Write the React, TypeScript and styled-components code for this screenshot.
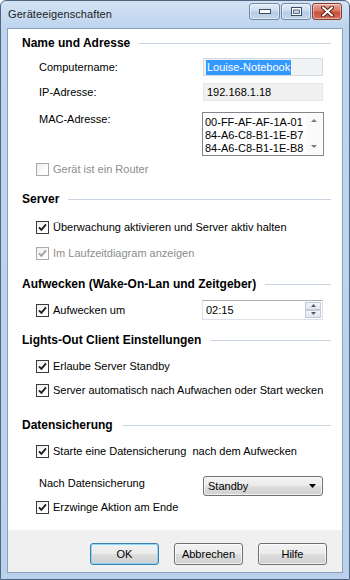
import React from 'react';
import styled, { createGlobalStyle } from 'styled-components';

const Global = createGlobalStyle`
  html, body { margin: 0; padding: 0; background: #fff; }
  body { width: 350px; height: 580px; overflow: hidden; font-family: "Liberation Sans", Arial, sans-serif; }
  #root { width: 350px; height: 580px; }
`;

const Window = styled.div`
  box-sizing: border-box;
  width: 350px;
  height: 580px;
  border: 1px solid #50657f;
  border-radius: 6px 6px 0 0;
  background: linear-gradient(to bottom, #d3e3f4 0px, #bed5ee 27px, #b9d1ea 100%);
  padding: 0 6px 6px 6px;
  display: flex;
  flex-direction: column;
`;

const TitleBar = styled.div`
  height: 27px;
  display: flex;
  align-items: flex-start;
  justify-content: space-between;
  flex: none;
`;

const Title = styled.div`
  padding: 7px 0 0 1px;
  font-size: 11px;
  color: #1b1b1b;
  letter-spacing: 0.1px;
`;

const Controls = styled.div`
  display: flex;
  gap: 1px;
  padding-top: 2px;
  margin-right: 1px;
`;

const CtrlButton = styled.div<{ $close?: boolean; $w: number }>`
  box-sizing: border-box;
  width: ${p => p.$w}px;
  height: 17px;
  border-radius: 3px;
  border: 1px solid ${p => (p.$close ? '#8a3b30' : '#7088a6')};
  background: ${p =>
    p.$close
      ? 'linear-gradient(to bottom, #e9a898 0%, #d87a66 45%, #c8523c 55%, #d0705a 100%)'
      : 'linear-gradient(to bottom, #e3ecf7 0%, #cddcee 45%, #b6cbe4 55%, #c4d6ec 100%)'};
  box-shadow: inset 0 0 0 1px rgba(255, 255, 255, 0.45);
  display: flex;
  align-items: center;
  justify-content: center;
`;

const ClientArea = styled.div`
  flex: 1;
  display: flex;
  flex-direction: column;
  border: 1px solid #8aa0bc;
  background: #fff;
`;

const Content = styled.div`
  flex: 1;
  display: flex;
  flex-direction: column;
  padding: 6px 11px 0 14px;
  font-size: 11px;
  color: #000;
`;

const SectionHeader = styled.div<{ $top: number }>`
  display: flex;
  align-items: center;
  gap: 9px;
  height: 16px;
  margin-top: ${p => p.$top}px;
  font-weight: bold;
  font-size: 12px;
  white-space: nowrap;
  &::after {
    content: '';
    flex: 1;
    height: 1px;
    background: #cad5e2;
  }
`;

const FieldRow = styled.div<{ $top: number; $h: number; $align?: 'center' | 'start' }>`
  display: grid;
  grid-template-columns: 181px 120px;
  align-items: ${p => p.$align ?? 'center'};
  height: ${p => p.$h}px;
  margin-top: ${p => p.$top}px;
`;

const Label = styled.div`
  padding-left: 17px;
  line-height: 14px;
`;

const CheckRow = styled.div<{ $top: number; $disabled?: boolean }>`
  display: flex;
  align-items: center;
  gap: 4px;
  height: 16px;
  margin-top: ${p => p.$top}px;
  padding-left: 14px;
  color: ${p => (p.$disabled ? '#8d8d8d' : '#000')};
  white-space: pre;
`;

const Box = styled.span<{ $disabled?: boolean }>`
  box-sizing: border-box;
  width: 13px;
  height: 13px;
  flex: none;
  border: 1px solid ${p => (p.$disabled ? '#a9a9a9' : '#3a3a3a')};
  background: linear-gradient(135deg, #ececec 0%, #ffffff 70%);
  display: flex;
  align-items: center;
  justify-content: center;
`;

const TextBox = styled.div<{ $bg: string; $border: string }>`
  box-sizing: border-box;
  height: 18px;
  background: ${p => p.$bg};
  border: 1px solid ${p => p.$border};
  display: flex;
  align-items: center;
  padding-left: 2px;
`;

const Selected = styled.span`
  background: #3399ff;
  color: #fff;
  padding: 1px 1px;
  line-height: 13px;
`;

const ListBox = styled.div`
  box-sizing: border-box;
  width: 122px;
  margin-left: -1px;
  height: 44px;
  border: 1px solid #82878f;
  background: #fff;
  display: flex;
`;

const ListItems = styled.div`
  flex: 1;
  padding: 3px 0 0 2px;
  line-height: 13px;
`;

const ScrollBar = styled.div`
  width: 16px;
  margin: 1px 1px 1px 0;
  background: #fafafa;
  display: flex;
  flex-direction: column;
  justify-content: space-between;
  align-items: center;
  padding: 5px 0;
`;

const TimeBox = styled.div`
  box-sizing: border-box;
  width: 121px;
  margin-left: -1px;
  height: 20px;
  border: 1px solid #dbe1e8;
  border-top-color: #abadb3;
  background: #fff;
  display: flex;
  align-items: center;
  padding-left: 3px;
  justify-content: space-between;
`;

const Spinner = styled.div`
  display: flex;
  flex-direction: column;
  gap: 0;
  margin-right: 1px;
`;

const SpinButton = styled.div`
  box-sizing: border-box;
  width: 16px;
  height: 8px;
  border: 1px solid #c3cbd5;
  background: linear-gradient(to bottom, #f3f6fa, #dfe6ef);
  display: flex;
  align-items: center;
  justify-content: center;
`;

const Combo = styled.div`
  box-sizing: border-box;
  height: 20px;
  border: 1px solid #707070;
  border-radius: 3px;
  background: linear-gradient(to bottom, #f3f3f3 0%, #ebebeb 48%, #dddddd 52%, #d1d1d1 100%);
  box-shadow: inset 0 0 0 1px rgba(255, 255, 255, 0.7);
  display: flex;
  align-items: center;
  justify-content: space-between;
  padding: 0 6px 0 4px;
`;

const ButtonBar = styled.div`
  height: 42px;
  flex: none;
  background: #f0f0f0;
  display: flex;
  justify-content: flex-end;
  align-items: flex-start;
  gap: 15px;
  padding: 13px 15px 0 0;
  box-sizing: border-box;
`;

const DialogButton = styled.div<{ $default?: boolean }>`
  box-sizing: border-box;
  width: 69px;
  height: 22px;
  border-radius: 3px;
  border: 1px solid ${p => (p.$default ? '#3c7fb1' : '#707070')};
  background: linear-gradient(to bottom, #f2f2f2 0%, #ebebeb 48%, #dddddd 52%, #cfcfcf 100%);
  box-shadow: inset 0 0 0 1px ${p => (p.$default ? 'rgba(120, 210, 250, 0.8)' : 'rgba(255, 255, 255, 0.75)')};
  font-size: 11px;
  color: #000;
  display: flex;
  align-items: center;
  justify-content: center;
`;

function Check({ checked, disabled, top, children }: { checked?: boolean; disabled?: boolean; top: number; children: React.ReactNode }) {
  return (
    <CheckRow $top={top} $disabled={disabled}>
      <Box $disabled={disabled}>
        {checked && (
          <svg width="9" height="9" viewBox="0 0 9 9">
            <path d="M1 4.3 L3.4 6.8 L8 1.4" fill="none" stroke={disabled ? '#a0a0a0' : '#1f1f1f'} strokeWidth="1.9" />
          </svg>
        )}
      </Box>
      <span>{children}</span>
    </CheckRow>
  );
}

const Tri = ({ up, color = '#606060', w = 7 }: { up?: boolean; color?: string; w?: number }) => (
  <svg width={w} height={Math.ceil(w / 2) + 1} viewBox={`0 0 ${w} ${Math.ceil(w / 2) + 1}`}>
    {up ? (
      <polygon points={`0,${Math.ceil(w / 2)} ${w},${Math.ceil(w / 2)} ${w / 2},0`} fill={color} />
    ) : (
      <polygon points={`0,0 ${w},0 ${w / 2},${Math.ceil(w / 2)}`} fill={color} />
    )}
  </svg>
);

export default function App() {
  return (
    <>
      <Global />
      <Window>
        <TitleBar>
          <Title>Geräteeigenschaften</Title>
          <Controls>
            <CtrlButton $w={31}>
              <svg width="12" height="5" viewBox="0 0 12 5">
                <rect x="0.5" y="0.5" width="11" height="4" fill="#fff" stroke="#3b4e66" />
              </svg>
            </CtrlButton>
            <CtrlButton $w={30}>
              <svg width="11" height="9" viewBox="0 0 11 9">
                <rect x="0.5" y="0.5" width="10" height="8" fill="#fff" stroke="#3b4e66" />
                <rect x="2.5" y="3" width="6" height="3.5" fill="#c6d6ea" stroke="#3b4e66" strokeWidth="0.8" />
              </svg>
            </CtrlButton>
            <CtrlButton $close $w={30}>
              <svg width="13" height="11" viewBox="0 0 13 11">
                <path d="M2 1.5 L11 9.5 M11 1.5 L2 9.5" stroke="#5a1e15" strokeWidth="4" strokeLinecap="round" />
                <path d="M2 1.5 L11 9.5 M11 1.5 L2 9.5" stroke="#fff" strokeWidth="2" strokeLinecap="round" />
              </svg>
            </CtrlButton>
          </Controls>
        </TitleBar>
        <ClientArea>
          <Content>
            <SectionHeader $top={0}>Name und Adresse</SectionHeader>
            <FieldRow $top={6} $h={20}>
              <Label>Computername:</Label>
              <TextBox $bg="#f1f2f4" $border="#d3dae3">
                <Selected>Louise-Notebook</Selected>
              </TextBox>
            </FieldRow>
            <FieldRow $top={5} $h={20}>
              <Label>IP-Adresse:</Label>
              <TextBox $bg="#f0f0f0" $border="#e6e6e6">
                <span style={{ paddingLeft: 1 }}>192.168.1.18</span>
              </TextBox>
            </FieldRow>
            <FieldRow $top={10} $h={44} $align="start">
              <Label>MAC-Adresse:</Label>
              <ListBox>
                <ListItems>
                  <div>00-FF-AF-AF-1A-01</div>
                  <div>84-A6-C8-B1-1E-B7</div>
                  <div>84-A6-C8-B1-1E-B8</div>
                </ListItems>
                <ScrollBar>
                  <Tri up w={6} color="#7a7a7a" />
                  <Tri w={6} color="#7a7a7a" />
                </ScrollBar>
              </ListBox>
            </FieldRow>
            <Check top={5} disabled>Gerät ist ein Router</Check>

            <SectionHeader $top={14}>Server</SectionHeader>
            <Check top={12} checked>Überwachung aktivieren und Server aktiv halten</Check>
            <Check top={10} checked disabled>Im Laufzeitdiagram anzeigen</Check>

            <SectionHeader $top={15}>Aufwecken (Wake-On-Lan und Zeitgeber)</SectionHeader>
            <FieldRow $top={8} $h={20}>
              <Check top={0} checked>Aufwecken um</Check>
              <TimeBox>
                <span>02:15</span>
                <Spinner>
                  <SpinButton><Tri up w={5} color="#4d5c6e" /></SpinButton>
                  <SpinButton><Tri w={5} color="#4d5c6e" /></SpinButton>
                </Spinner>
              </TimeBox>
            </FieldRow>

            <SectionHeader $top={12}>Lights-Out Client Einstellungen</SectionHeader>
            <Check top={10} checked>Erlaube Server Standby</Check>
            <Check top={8} checked>Server automatisch nach Aufwachen oder Start wecken</Check>

            <SectionHeader $top={19}>Datensicherung</SectionHeader>
            <Check top={10} checked>Starte eine Datensicherung  nach dem Aufwecken</Check>
            <FieldRow $top={17} $h={20} $align="start">
              <Label>Nach Datensicherung</Label>
              <Combo>
                <span>Standby</span>
                <Tri w={7} color="#000" />
              </Combo>
            </FieldRow>
            <Check top={3} checked>Erzwinge Aktion am Ende</Check>
          </Content>
          <ButtonBar>
            <DialogButton $default>OK</DialogButton>
            <DialogButton>Abbrechen</DialogButton>
            <DialogButton>Hilfe</DialogButton>
          </ButtonBar>
        </ClientArea>
      </Window>
    </>
  );
}
